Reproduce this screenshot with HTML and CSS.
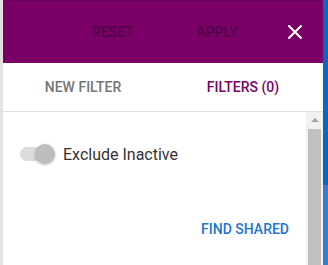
FILE: index.html
```html
<!DOCTYPE html>
<html>
<head>
    <title>Filters</title>
    <link rel="stylesheet" href="styles.css">
</head>
<body>
    <div class="frame">
        <div class="edge-left"></div>
        <div class="panel">
            <div class="panel-header">
                <button class="header-button reset">Reset</button>
                <button class="header-button apply">Apply</button>
                <button class="close-button" aria-label="Close">
                    <svg width="14" height="14" viewBox="0 0 14 14">
                        <path d="M1 1 L13 13 M13 1 L1 13" stroke="#fff" stroke-width="2" stroke-linecap="square"/>
                    </svg>
                </button>
            </div>
            <div class="tabs">
                <div class="tab">New Filter</div>
                <div class="tab active">Filters (0)</div>
            </div>
            <div class="scroll-area">
                <div class="scroll-content">
                    <label class="switch-row">
                        <span class="switch">
                            <span class="switch-track"></span>
                            <span class="switch-thumb"></span>
                        </span>
                        <span class="switch-label">Exclude Inactive</span>
                    </label>
                    <div class="actions">
                        <button class="link-button">Find Shared</button>
                    </div>
                </div>
                <div class="scrollbar">
                    <div class="scroll-arrow"></div>
                    <div class="scroll-thumb"></div>
                </div>
            </div>
        </div>
        <div class="edge-right"></div>
    </div>
</body>
</html>
```

FILE: styles.css
```css
body {
    margin: 0;
    font-family: Roboto, "Liberation Sans", Arial, sans-serif;
    background: #fff;
    overflow: hidden;
}
.frame {
    display: flex;
    height: 265px;
}
.edge-left {
    width: 3px;
    background: #e2e2e2;
}
.edge-right {
    width: 5px;
    background: linear-gradient(to bottom, #0d63c6 0, #0d63c6 185px, #2f80d2 185px);
}
.panel {
    flex: 1;
    display: flex;
    flex-direction: column;
    background: #fff;
}
.panel-header {
    height: 62px;
    border-top: 1px solid #650055;
    background: #7a0067;
    display: flex;
    align-items: center;
    padding-left: 65px;
    padding-right: 8px;
}
.header-button {
    background: none;
    border: none;
    width: 90px;
    padding: 0;
    font-family: inherit;
    font-size: 14px;
    font-weight: 500;
    text-transform: uppercase;
    color: #4f0045;
    cursor: default;
}
.header-button.apply {
    margin-left: 14px;
}
.close-button {
    margin-left: auto;
    width: 40px;
    height: 40px;
    background: none;
    border: none;
    padding: 0;
    display: flex;
    align-items: center;
    justify-content: center;
    cursor: pointer;
}
.tabs {
    display: flex;
    height: 48px;
    border-bottom: 1px solid #e0e0e0;
}
.tab {
    flex: 1;
    display: flex;
    align-items: center;
    justify-content: center;
    font-size: 14px;
    font-weight: 500;
    text-transform: uppercase;
    color: #757575;
}
.tab.active {
    color: #7a0067;
}
.scroll-area {
    flex: 1;
    display: flex;
    min-height: 0;
}
.scroll-content {
    flex: 1;
    padding: 30px 17px 0 17px;
}
.switch-row {
    display: flex;
    align-items: center;
    height: 24px;
}
.switch {
    position: relative;
    width: 36px;
    height: 24px;
    margin-right: 7px;
}
.switch-track {
    position: absolute;
    left: 0;
    top: 5px;
    width: 34px;
    height: 14px;
    border-radius: 7px;
    background: #dcdcdc;
}
.switch-thumb {
    position: absolute;
    left: 15px;
    top: 2px;
    width: 20px;
    height: 20px;
    border-radius: 50%;
    background: #bdbdbd;
    box-shadow: 0 1px 3px rgba(0, 0, 0, 0.25);
}
.switch-label {
    font-size: 16px;
    color: #333;
}
.actions {
    display: flex;
    justify-content: flex-end;
    margin-top: 55px;
}
.link-button {
    background: none;
    border: none;
    padding: 0;
    font-family: inherit;
    font-size: 14px;
    font-weight: 500;
    text-transform: uppercase;
    color: #1a76d2;
    cursor: pointer;
}
.scrollbar {
    width: 17px;
    background: #f1f1f1;
    display: flex;
    flex-direction: column;
    align-items: center;
}
.scroll-arrow {
    margin-top: 6px;
    width: 0;
    height: 0;
    border-left: 4px solid transparent;
    border-right: 4px solid transparent;
    border-bottom: 4px solid #a3a3a3;
}
.scroll-thumb {
    margin-top: 7px;
    width: 13px;
    flex: 1;
    background: #c1c1c1;
}
```
